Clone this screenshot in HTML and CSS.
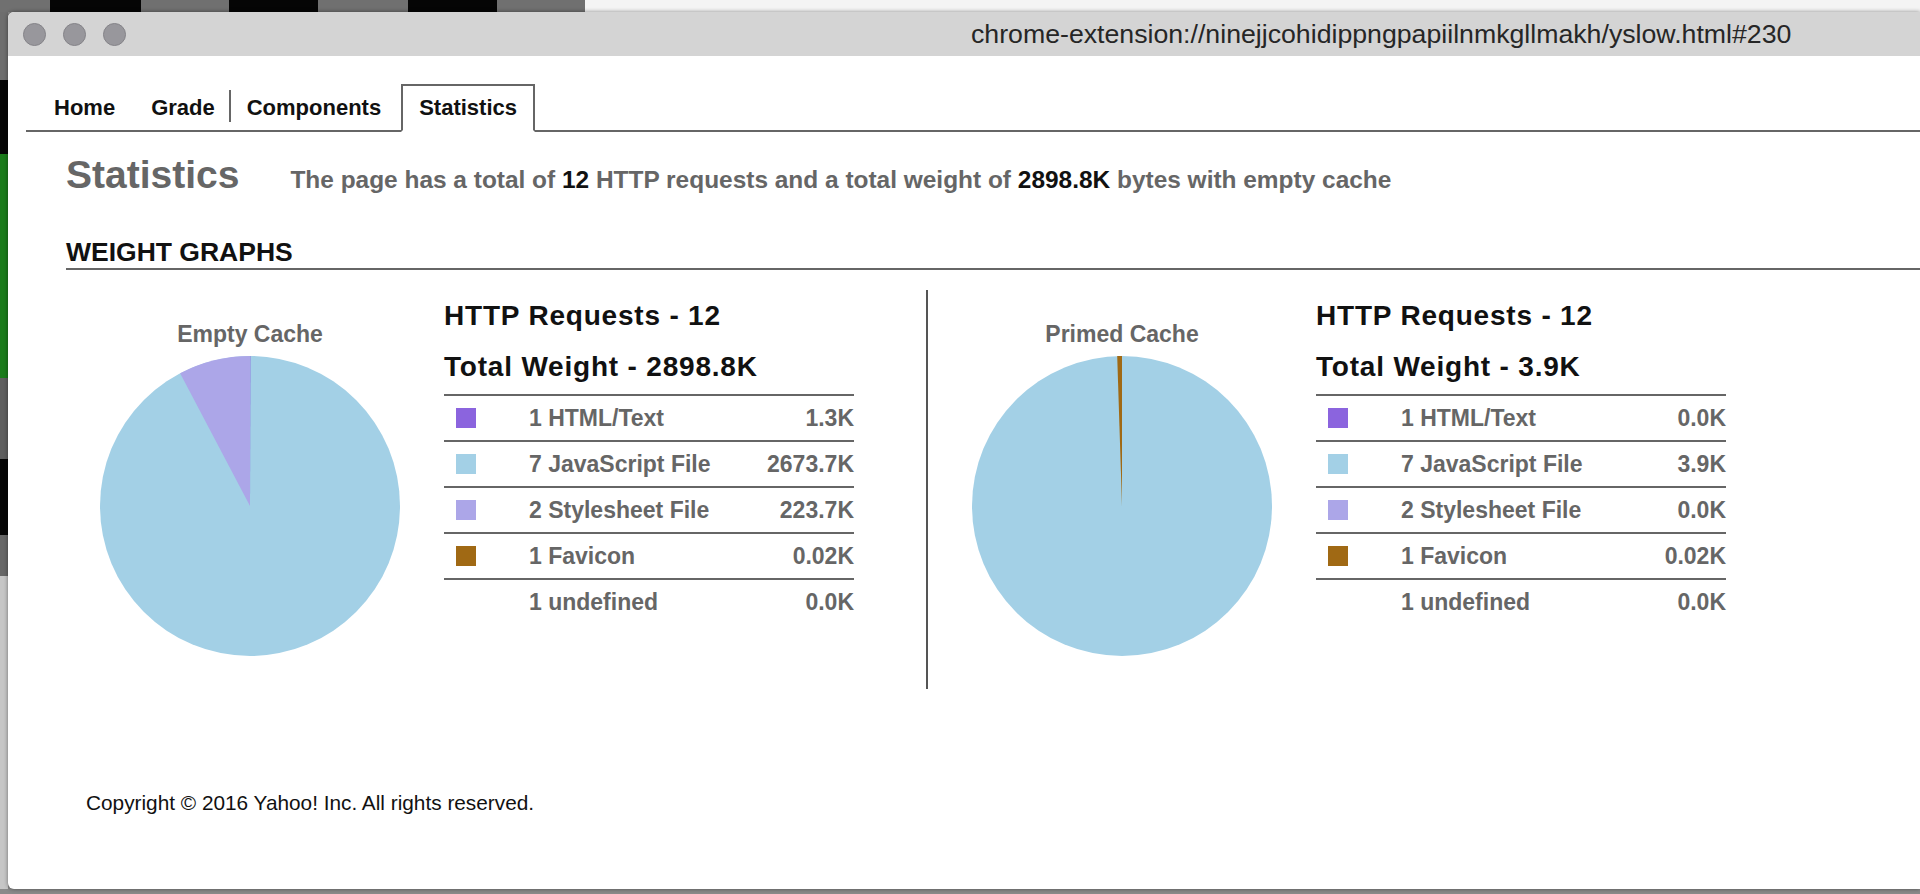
FILE: index.html
```html
<!DOCTYPE html>
<html>
<head>
<meta charset="utf-8">
<title>YSlow Statistics</title>
<link rel="stylesheet" href="styles.css">
</head>
<body>
<div class="window">
  <div class="titlebar">
    <div class="lights"><span class="light"></span><span class="light"></span><span class="light"></span></div>
    <div class="url">chrome-extension://ninejjcohidippngpapiilnmkgllmakh/yslow.html#230</div>
  </div>
  <div class="content">
    <ul class="tabs">
      <li class="tab">Home</li>
      <li class="tab">Grade</li>
      <li class="tab-sep"></li>
      <li class="tab">Components</li>
      <li class="tab active">Statistics</li>
    </ul>
    <div class="page">
      <div class="stats-head">
        <h1 class="title">Statistics</h1>
        <p class="summary">The page has a total of <b>12</b> HTTP requests and a total weight of <b>2898.8K</b> bytes with empty cache</p>
      </div>
      <h2 class="section">WEIGHT GRAPHS</h2>
      <div class="graphs">
        <div class="half half-first">
          <div class="chart">
            <div class="chart-label">Empty Cache</div>
            <svg class="pie" width="300" height="300" viewBox="0 0 300 300">
              <circle cx="150" cy="150" r="150" fill="#a3d0e6"/>
              <path d="M150 150 L80.1 17.3 A150 150 0 0 1 150 0 Z" fill="#aca6e8"/>
              <path d="M150 150 L150 0 A150 150 0 0 1 150.42 0 Z" fill="#8b64de"/>
            </svg>
          </div>
          <div class="legend">
            <h3 class="legend-title">HTTP Requests - 12</h3>
            <h3 class="legend-title">Total Weight - 2898.8K</h3>
            <table class="legend-table">
              <tr><td class="sw-cell"><span class="sw sw-html"></span></td><td class="name">1 HTML/Text</td><td class="val">1.3K</td></tr>
              <tr><td class="sw-cell"><span class="sw sw-js"></span></td><td class="name">7 JavaScript File</td><td class="val">2673.7K</td></tr>
              <tr><td class="sw-cell"><span class="sw sw-css"></span></td><td class="name">2 Stylesheet File</td><td class="val">223.7K</td></tr>
              <tr><td class="sw-cell"><span class="sw sw-fav"></span></td><td class="name">1 Favicon</td><td class="val">0.02K</td></tr>
              <tr><td class="sw-cell"></td><td class="name">1 undefined</td><td class="val">0.0K</td></tr>
            </table>
          </div>
        </div>
        <div class="half half-second">
          <div class="chart">
            <div class="chart-label">Primed Cache</div>
            <svg class="pie" width="300" height="300" viewBox="0 0 300 300">
              <circle cx="150" cy="150" r="150" fill="#a3d0e6"/>
              <path d="M150 150 L145.2 0.08 A150 150 0 0 1 150 0 Z" fill="#a06914"/>
            </svg>
          </div>
          <div class="legend">
            <h3 class="legend-title">HTTP Requests - 12</h3>
            <h3 class="legend-title">Total Weight - 3.9K</h3>
            <table class="legend-table">
              <tr><td class="sw-cell"><span class="sw sw-html"></span></td><td class="name">1 HTML/Text</td><td class="val">0.0K</td></tr>
              <tr><td class="sw-cell"><span class="sw sw-js"></span></td><td class="name">7 JavaScript File</td><td class="val">3.9K</td></tr>
              <tr><td class="sw-cell"><span class="sw sw-css"></span></td><td class="name">2 Stylesheet File</td><td class="val">0.0K</td></tr>
              <tr><td class="sw-cell"><span class="sw sw-fav"></span></td><td class="name">1 Favicon</td><td class="val">0.02K</td></tr>
              <tr><td class="sw-cell"></td><td class="name">1 undefined</td><td class="val">0.0K</td></tr>
            </table>
          </div>
        </div>
      </div>
      <p class="copyright">Copyright © 2016 Yahoo! Inc. All rights reserved.</p>
    </div>
  </div>
</div>
</body>
</html>
```

FILE: styles.css
```css
html, body {
  margin: 0;
  padding: 0;
}
body {
  width: 1920px;
  height: 894px;
  overflow: hidden;
  font-family: "Liberation Sans", Arial, sans-serif;
  background-color: #8a8a8a;
  background-image:
    linear-gradient(to right, #707070 0 50px, #050505 50px 141px, #707070 141px 229px, #050505 229px 318px, #707070 318px 408px, #050505 408px 497px, #707070 497px 585px, #f4f4f4 585px),
    linear-gradient(to bottom, #6e6e6e 0 80px, #060606 80px 154px, #1b7c1b 154px 378px, #5f5f5f 378px 459px, #060606 459px 535px, #676767 535px 576px, #c6c6c6 576px 889px, #8a8a8a 889px);
  background-size: 100% 12px, 8px 100%;
  background-repeat: no-repeat, no-repeat;
}
.window {
  margin: 12px 0 0 8px;
  width: 1912px;
  height: 877px;
  background: #ffffff;
  border-radius: 6px 0 0 6px;
  box-shadow: 0 0 4px rgba(0, 0, 0, 0.45);
  overflow: hidden;
}
.titlebar {
  height: 44px;
  background: #d4d4d4;
  display: flex;
  align-items: center;
  padding-left: 15px;
  box-sizing: border-box;
}
.lights {
  display: flex;
  gap: 17px;
}
.light {
  width: 21px;
  height: 21px;
  border-radius: 50%;
  background: #98979c;
  border: 1px solid #848388;
}
.url {
  margin-left: 845px;
  font-family: "Liberation Sans", Arial, sans-serif;
  font-size: 26.7px;
  color: #262626;
  white-space: nowrap;
}
.tabs {
  list-style: none;
  margin: 28px 0 0 18px;
  padding: 0 0 0 10px;
  display: flex;
  align-items: flex-start;
  height: 46px;
  border-bottom: 2px solid #666;
}
.tab {
  font-size: 22px;
  font-weight: bold;
  line-height: 24px;
  color: #111;
  padding: 10px 16px;
  border: 2px solid transparent;
}
.tab.active {
  border-color: #666;
  border-bottom-color: #fff;
  background: #fff;
  margin-left: 2px;
}
.tab-sep {
  width: 2px;
  height: 32px;
  background: #666;
  margin: 6px -2px 0 -4px;
}
.page {
  padding-left: 58px;
}
.stats-head {
  display: flex;
  align-items: baseline;
  gap: 51px;
  margin-top: 21px;
}
.title {
  margin: 0;
  font-size: 39px;
  line-height: 44px;
  font-weight: bold;
  color: #666;
}
.summary {
  margin: 0;
  font-size: 24.45px;
  font-weight: bold;
  color: #666;
  white-space: nowrap;
}
.summary b {
  color: #111;
}
.section {
  margin: 40px 0 0 0;
  font-size: 26.5px;
  line-height: 30px;
  font-weight: bold;
  color: #111;
  padding-bottom: 1px;
  border-bottom: 2px solid #666;
}
.graphs {
  display: flex;
  margin-top: 20px;
  height: 399px;
}
.half {
  display: flex;
  gap: 44px;
  box-sizing: border-box;
  height: 399px;
}
.half-first {
  width: 862px;
  padding-left: 34px;
  border-right: 2px solid #555;
}
.half-second {
  padding-left: 44px;
}
.chart {
  width: 300px;
  padding-top: 30px;
  display: flex;
  flex-direction: column;
  align-items: center;
}
.chart-label {
  font-size: 23px;
  line-height: 28px;
  font-weight: bold;
  color: #666;
  margin-bottom: 8px;
}
.pie {
  display: block;
}
.legend {
  width: 410px;
  padding-top: 9px;
}
.legend-title {
  margin: 0 0 17px 0;
  font-size: 28px;
  line-height: 34px;
  letter-spacing: 0.8px;
  font-weight: bold;
  color: #111;
  white-space: nowrap;
}
.legend-table {
  width: 410px;
  border-collapse: collapse;
  margin-top: -7px;
}
.legend-table td {
  border-top: 2px solid #666;
  height: 44px;
  padding: 0;
  font-size: 23px;
  line-height: 44px;
  font-weight: bold;
  color: #666;
  white-space: nowrap;
}
.sw-cell {
  width: 73px;
  padding-left: 12px !important;
}
.sw {
  display: block;
  width: 20px;
  height: 20px;
}
.sw-html { background: #8b64de; }
.sw-js { background: #a3d0e6; }
.sw-css { background: #aca6e8; }
.sw-fav { background: #a06914; }
.val {
  text-align: right;
}
.copyright {
  margin: 102px 0 0 20px;
  font-size: 20.8px;
  line-height: 24px;
  color: #111;
}
```
